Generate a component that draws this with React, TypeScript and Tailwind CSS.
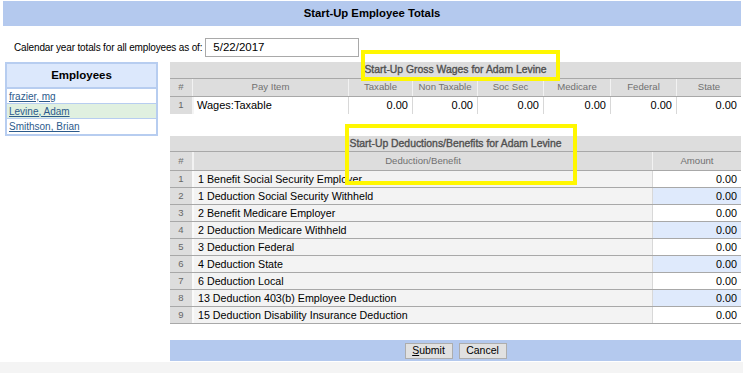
import React from "react";

const deductions = [
  "1 Benefit Social Security Employer",
  "1 Deduction Social Security Withheld",
  "2 Benefit Medicare Employer",
  "2 Deduction Medicare Withheld",
  "3 Deduction Federal",
  "4 Deduction State",
  "6 Deduction Local",
  "13 Deduction 403(b) Employee Deduction",
  "15 Deduction Disability Insurance Deduction",
];

const grossCols = ["Taxable", "Non Taxable", "Soc Sec", "Medicare", "Federal", "State"];

export default function App() {
  return (
    <div
      className="relative w-[743px] h-[373px] bg-white overflow-hidden text-black"
      style={{ fontFamily: '"Liberation Sans", Arial, sans-serif' }}
    >
      {/* Title bar */}
      <div className="mt-[1px] ml-[3px] w-[738px] h-[25px] bg-[#b4c9ee] flex items-center justify-center text-[11.3px] font-bold">
        Start-Up Employee Totals
      </div>

      {/* Calendar row */}
      <div className="mt-[12px] ml-[14px] flex items-center h-[19px]">
        <span className="text-[10px] tracking-[-0.15px]">Calendar year totals for all employees as of:</span>
        <div className="ml-[3px] w-[154px] h-[19px] border border-[#a9a9a9] flex items-center pl-[7px] text-[11.5px]">
          5/22/2017
        </div>
      </div>

      <div className="mt-[5px] flex">
        {/* Employees panel */}
        <div className="ml-[5px] w-[153px] h-[74px] border-2 border-[#b7cdf0] flex flex-col">
          <div className="h-[25px] bg-[#dce8fc] flex items-center justify-center text-[11.5px] font-bold border-b-2 border-[#b7cdf0]">
            Employees
          </div>
          <div className="h-[15px] bg-white flex items-center pl-[2px] text-[10px] border-b border-[#b7cdf0]">
            <span className="underline text-[#2c5b8c]">frazier, mg</span>
          </div>
          <div className="h-[15px] bg-[#e0f0e0] flex items-center pl-[2px] text-[10px] border-b border-[#b7cdf0]">
            <span className="underline text-[#2c5b8c]">Levine, Adam</span>
          </div>
          <div className="flex-1 bg-white flex items-center pl-[2px] text-[10px]">
            <span className="underline text-[#2c5b8c]">Smithson, Brian</span>
          </div>
        </div>

        {/* Right content */}
        <div className="ml-[12px] w-[571px] flex flex-col">
          {/* Gross wages table */}
          <div className="w-[571px]">
            <div className="h-[17px] bg-[#dddddd] border-b border-[#a8a8a8] flex items-center justify-center text-[10.4px] text-[#505050] [-webkit-text-stroke:0.35px_#505050]">
              Start-Up Gross Wages for Adam Levine
            </div>
            <div className="grid grid-cols-[22px_156px_64px_65px_66px_67px_66px_65px] h-[18px] bg-[#dddddd] border-b border-[#a8a8a8] text-[9.6px] text-[#707070]">
              <div className="flex items-center justify-center">#</div>
              <div className="flex items-center justify-center border-l border-[#f2f2f2]">Pay Item</div>
              {grossCols.map((c) => (
                <div key={c} className="flex items-center justify-center border-l border-[#f2f2f2]">
                  {c}
                </div>
              ))}
            </div>
            <div className="grid grid-cols-[22px_156px_64px_65px_66px_67px_66px_65px] h-[17px] border-b border-[#a8a8a8] text-[11px]">
              <div className="flex items-center justify-center bg-[#dddddd] text-[#666666] text-[9.5px]">1</div>
              <div className="flex items-center pl-[3px] bg-white border-l-2 border-[#f4f4f4]">Wages:Taxable</div>
              {grossCols.map((c) => (
                <div key={c} className="flex items-center justify-end pr-[4px] bg-white border-l border-[#d8d8d8]">
                  0.00
                </div>
              ))}
            </div>
          </div>

          {/* Deductions table */}
          <div className="mt-[22px] w-[571px]">
            <div className="h-[16px] bg-[#dddddd] border-b border-[#a8a8a8] flex items-center justify-center text-[10.4px] text-[#505050] [-webkit-text-stroke:0.35px_#505050]">
              Start-Up Deductions/Benefits for Adam Levine
            </div>
            <div className="grid grid-cols-[22px_460px_89px] h-[19px] bg-[#dddddd] border-b border-[#a8a8a8] text-[9.6px] text-[#707070]">
              <div className="flex items-center justify-center">#</div>
              <div className="flex items-center justify-center border-l-2 border-[#f2f2f2]">Deduction/Benefit</div>
              <div className="flex items-center justify-center border-l border-[#f2f2f2]">Amount</div>
            </div>
            {deductions.map((d, i) => (
              <div
                key={d}
                className="grid grid-cols-[22px_460px_89px] h-[17px] border-b border-[#a8a8a8]"
              >
                <div className="flex items-center justify-center bg-[#dddddd] text-[#666666] text-[9.5px]">
                  {i + 1}
                </div>
                <div className="flex items-center pl-[4px] bg-[#f3f3f3] border-l-2 border-[#fafafa] text-[10.7px]">
                  {d}
                </div>
                <div
                  className={`flex items-center justify-end pr-[4px] border-l border-[#d8d8d8] text-[10.8px] ${
                    i % 2 === 1 ? "bg-[#dfeafc]" : "bg-white"
                  }`}
                >
                  0.00
                </div>
              </div>
            ))}
          </div>

          {/* Button bar */}
          <div className="mt-[16px] h-[21px] bg-[#b4c9ee] flex items-center justify-center gap-[6px]">
            <div className="w-[48px] h-[16px] bg-[#e1e1e1] border border-[#adadad] flex items-center justify-center text-[10.5px]">
              <span>
                <span className="underline">S</span>ubmit
              </span>
            </div>
            <div className="w-[48px] h-[16px] bg-[#e1e1e1] border border-[#adadad] flex items-center justify-center text-[10.5px]">
              Cancel
            </div>
          </div>
        </div>
      </div>

      {/* bottom strip */}
      <div className="absolute left-0 right-0 top-[362px] bottom-0 bg-[#f4f4f4]" />

      {/* Yellow annotation boxes */}
      <div className="absolute left-[361px] top-[50px] w-[199px] h-[31px] border-4 border-[#fff700]" />
      <div className="absolute left-[345px] top-[124px] w-[232px] h-[61px] border-4 border-[#fff700]" />
    </div>
  );
}
